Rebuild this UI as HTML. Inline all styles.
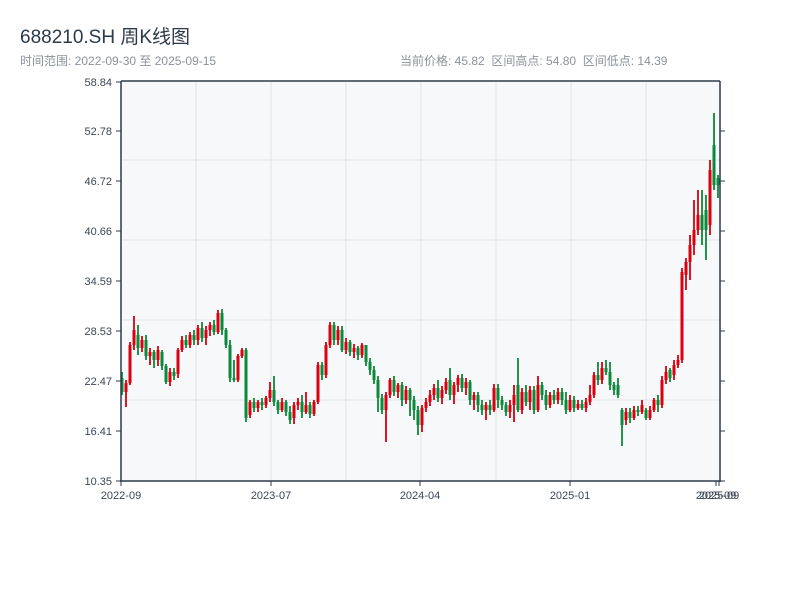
<!DOCTYPE html>
<html><head><meta charset="utf-8"><style>
body{margin:0;width:800px;height:600px;background:#fff;font-family:"Liberation Sans","Noto Sans CJK SC",sans-serif;overflow:hidden}
.t{position:absolute;left:20px;top:22px;font-size:19px;color:#2b3a4a}
.s{position:absolute;top:52px;font-size:12px;color:#8a929b}
</style></head><body>
<div class="t">688210.SH 周K线图</div>
<div class="s" style="left:20px">时间范围: 2022-09-30 至 2025-09-15</div>
<div class="s" style="left:400px">当前价格: 45.82&nbsp; 区间高点: 54.80&nbsp; 区间低点: 14.39</div>
<svg width="800" height="600" style="position:absolute;left:0;top:0" font-family="Liberation Sans, sans-serif" font-size="11" fill="#3c4654">
<rect x="121" y="81" width="599" height="400" fill="#f6f8fa"/>
<g stroke="#e0e3e8" stroke-width="1">
<line x1="196" y1="81" x2="196" y2="481"/><line x1="271" y1="81" x2="271" y2="481"/><line x1="346" y1="81" x2="346" y2="481"/><line x1="421" y1="81" x2="421" y2="481"/><line x1="496" y1="81" x2="496" y2="481"/><line x1="571" y1="81" x2="571" y2="481"/><line x1="646" y1="81" x2="646" y2="481"/>
<line x1="121" y1="160" x2="720" y2="160"/><line x1="121" y1="240" x2="720" y2="240"/><line x1="121" y1="320" x2="720" y2="320"/><line x1="121" y1="400" x2="720" y2="400"/>
</g>
<g stroke="#0a8a3a" fill="none">
<path stroke-width="1.8" d="M122 372V395M138 325V355M146 335V360M154 350V368M162 350V370M166 364V384M174 368V380M186 335V348M194 330V345M202 322V342M214 320V335M222 309V335M226 328V348M230 340V382M234 360V382M246 348V422M254 398V412M262 398V410M274 376V406M278 400V414M286 400V416M290 406V424M302 395V418M310 402V418M322 362V380M334 322V345M342 326V352M350 340V356M358 346V360M366 345V366M370 358V375M374 366V384M378 376V412M382 394V414M394 376V396M402 382V406M410 388V416M414 396V420M418 406V435M438 380V402M450 368V400M462 374V392M470 380V405M478 392V412M482 400V415M490 400V415M498 384V408M502 396V410M506 402V416M518 358V412M526 385V406M534 386V414M542 382V400M546 390V410M554 390V404M562 388V405M566 392V414M574 396V412M582 400V410M598 362V385M606 360V375M610 362V390M614 382V395M618 378V398M622 408V446M630 408V423M638 406V416M646 408V420M658 395V412M670 368V382M702 190V245M706 195V260M714 113V190M718 175V198"/>
<path stroke-width="3" d="M122 378V392M138 335V348M146 340V356M154 352V360M162 352V366M166 366V382M174 372V376M186 340V345M194 335V340M202 328V338M214 325V332M222 313V330M226 330V345M230 345V378M234 378V380M246 350V418M254 402V408M262 402V405M274 390V402M278 402V410M286 402V412M290 412V420M302 402V412M310 405V414M322 365V375M334 325V340M342 330V350M350 342V352M358 348V355M366 345V362M370 362V370M374 370V380M378 380V398M382 398V410M394 380V392M402 385V400M410 390V400M414 400V410M418 410V425M438 388V398M450 380V395M462 378V388M470 382V400M478 395V405M482 405V410M490 405V410M498 388V400M502 400V405M506 405V412M518 385V410M526 392V402M534 390V410M542 385V395M546 395V405M554 395V400M562 392V400M566 400V410M574 400V408M582 404V408M598 375V380M606 368V372M610 372V385M614 385V390M618 385V395M622 410V425M630 412V418M638 410V412M646 410V418M658 400V405M670 370V378M702 215V230M706 210V230M714 145V185M718 178V185"/>
</g>
<g stroke="#d9000f" fill="none">
<path stroke-width="1.8" d="M126 380V407M130 342V385M134 316V350M142 336V352M150 348V365M158 346V366M170 368V386M178 348V378M182 336V352M190 332V348M198 325V345M206 326V345M210 322V336M218 310V334M238 354V382M242 348V358M250 400V418M258 400V412M266 396V408M270 382V402M282 398V412M294 402V424M298 398V410M306 392V414M314 400V416M318 362V404M326 342V378M330 322V348M338 326V345M346 338V354M354 344V358M362 343V358M386 392V442M390 378V398M398 383V398M406 386V404M422 405V432M426 398V412M430 390V406M434 384V400M442 386V404M446 378V394M454 382V404M458 375V392M466 378V395M474 392V410M486 402V420M494 384V412M510 400V418M514 385V422M522 388V414M530 386V410M538 376V412M550 392V408M558 388V404M570 395V412M578 400V410M586 398V412M590 385V405M594 372V398M602 362V384M626 408V425M634 406V420M642 400V414M650 406V420M654 398V412M662 376V408M666 366V384M674 360V380M678 355V368M682 268V363M686 258V290M690 235V280M694 200V255M698 190V235M710 160V235"/>
<path stroke-width="3" d="M126 383V392M130 345V383M134 330V345M142 340V348M150 352V356M158 350V360M170 372V382M178 350V374M182 340V350M190 335V345M198 328V340M206 330V338M210 325V330M218 313V332M238 356V380M242 350V356M250 402V415M258 402V408M266 398V405M270 390V398M282 402V410M294 405V418M298 402V405M306 405V412M314 402V414M318 365V402M326 345V375M330 325V345M338 330V340M346 342V350M354 348V352M362 345V355M386 395V410M390 380V395M398 385V392M406 390V400M422 408V425M426 402V408M430 395V402M434 388V395M442 390V398M446 382V390M454 385V395M458 378V385M466 382V388M474 395V400M486 405V410M494 388V410M510 405V412M514 395V405M522 392V410M530 390V402M538 385V410M550 395V405M558 392V400M570 400V410M578 404V408M586 402V408M590 395V402M594 375V395M602 368V380M626 412V420M634 410V418M642 405V412M650 410V418M654 400V410M662 380V405M666 372V380M674 365V375M678 360V365M682 272V360M686 262V275M690 245V262M694 230V245M698 215V230M710 170V225"/>
</g>
<g stroke="#2b3a4a" stroke-width="1.5" fill="none">
<line x1="121" y1="81" x2="720" y2="81"/><line x1="121" y1="81" x2="121" y2="482"/><line x1="720" y1="81" x2="720" y2="482"/><line x1="120" y1="481" x2="721" y2="481"/>
</g>
<g stroke="#2b3a4a" stroke-width="1">
<line x1="116" y1="82" x2="121" y2="82"/><line x1="116" y1="131" x2="121" y2="131"/><line x1="116" y1="181" x2="121" y2="181"/><line x1="116" y1="231" x2="121" y2="231"/><line x1="116" y1="281" x2="121" y2="281"/><line x1="116" y1="331" x2="121" y2="331"/><line x1="116" y1="381" x2="121" y2="381"/><line x1="116" y1="431" x2="121" y2="431"/><line x1="116" y1="481" x2="121" y2="481"/>
<line x1="720" y1="131" x2="725" y2="131"/><line x1="720" y1="181" x2="725" y2="181"/><line x1="720" y1="231" x2="725" y2="231"/><line x1="720" y1="281" x2="725" y2="281"/><line x1="720" y1="331" x2="725" y2="331"/><line x1="720" y1="381" x2="725" y2="381"/><line x1="720" y1="431" x2="725" y2="431"/><line x1="720" y1="481" x2="725" y2="481"/>
<line x1="121" y1="481" x2="121" y2="486"/><line x1="271" y1="481" x2="271" y2="486"/><line x1="420" y1="481" x2="420" y2="486"/><line x1="570" y1="481" x2="570" y2="486"/><line x1="716" y1="481" x2="716" y2="486"/><line x1="719" y1="481" x2="719" y2="486"/>
</g>
<g text-anchor="end"><text x="112" y="86">58.84</text><text x="112" y="135">52.78</text><text x="112" y="185">46.72</text><text x="112" y="235">40.66</text><text x="112" y="285">34.59</text><text x="112" y="335">28.53</text><text x="112" y="385">22.47</text><text x="112" y="435">16.41</text><text x="112" y="485">10.35</text></g>
<g text-anchor="middle"><text x="121" y="499">2022-09</text><text x="271" y="499">2023-07</text><text x="420" y="499">2024-04</text><text x="570" y="499">2025-01</text><text x="716" y="499">2025-09</text><text x="719" y="499">2025-09</text></g>
</svg>
</body></html>
